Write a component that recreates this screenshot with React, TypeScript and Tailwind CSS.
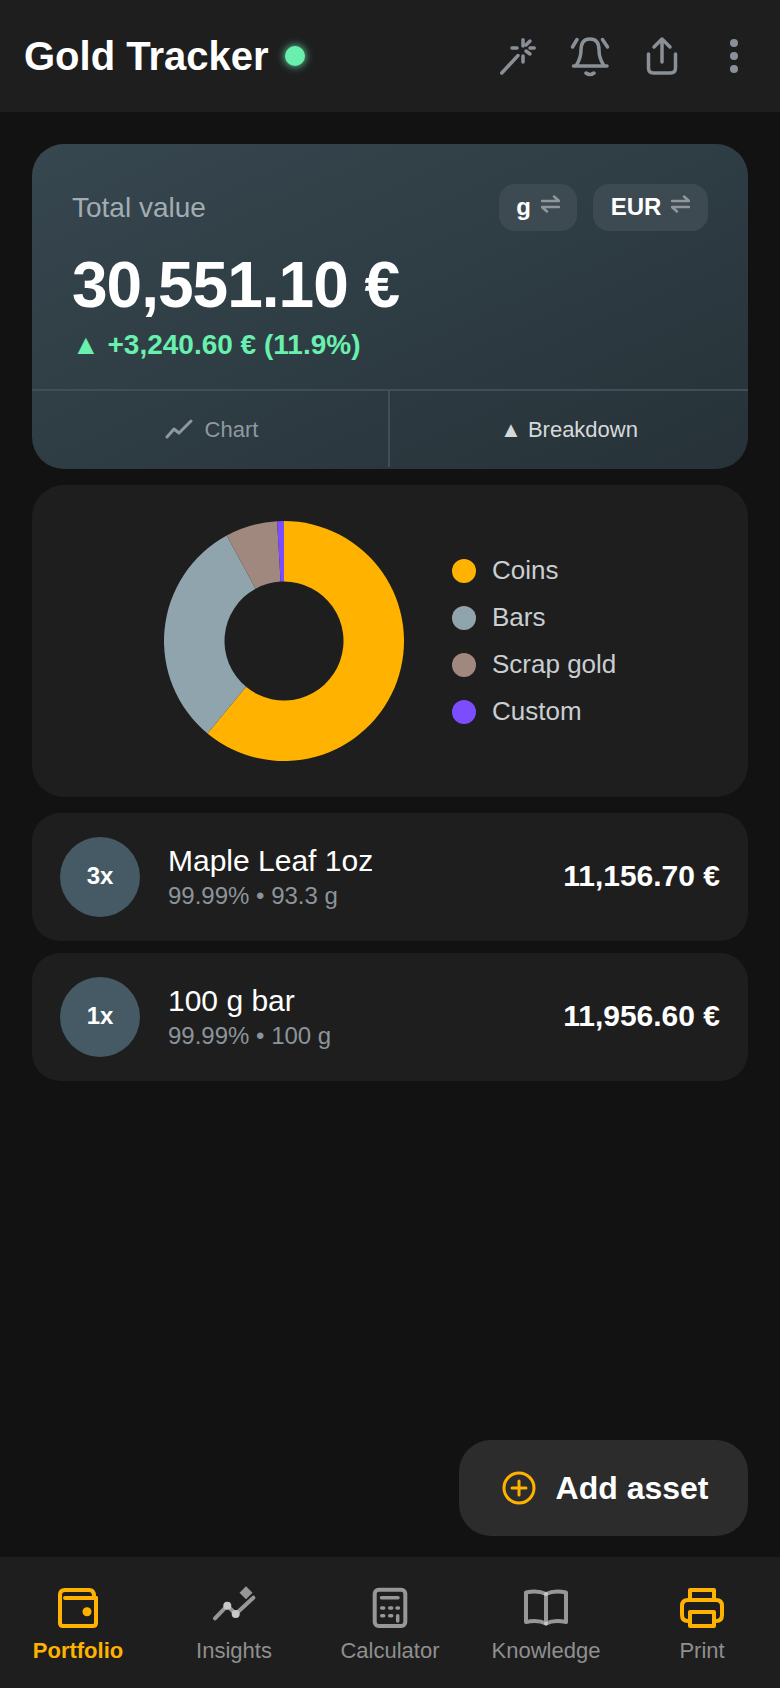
import React from "react";

const font = "font-['Liberation_Sans',Arial,sans-serif]";

function Wand() {
  return (
    <svg width="36" height="37" viewBox="0 0 36 37" fill="none" stroke="#8a9097" strokeWidth="3.500" strokeLinecap="round">
      <path d="M1.800 35 L18 17.500" />
      <path d="M23 1.800 V8 M26 7 L30 3 M30 10 H34.200 M12 10 H17 M26 13 L30 16 M23 18 V24" />
    </svg>
  );
}
function Bell() {
  return (
    <svg width="40" height="41" viewBox="0 0 40 41" fill="none" stroke="#8a9097" strokeWidth="3.500" strokeLinecap="round" strokeLinejoin="round">
      <path d="M3.500 30 H37" />
      <path d="M6.500 29 C9 25 11 20 11 14 C11 6 15 3 20 3 C25 3 29 6 29 14 C29 20 31 25 33.500 29" />
      <path d="M16 37 Q20 40 24 37" />
      <path d="M2.500 11 L7 3.500 M32.500 3.500 L37.500 11" />
    </svg>
  );
}
function ShareIcon() {
  return (
    <svg width="32" height="40" viewBox="0 0 32 40" fill="none" stroke="#8a9097" strokeWidth="3.500" strokeLinecap="round" strokeLinejoin="round">
      <path d="M16 26 V3 M8 11 L16 3 L24 11" />
      <path d="M2.500 18 V32 Q2.500 37 7.500 37 H24.500 Q29.500 37 29.500 32 V18" />
    </svg>
  );
}
function Dots() {
  return (
    <svg width="10" height="36" viewBox="0 0 10 36" fill="#8a9097">
      <circle cx="5" cy="5" r="4" />
      <circle cx="5" cy="18" r="4" />
      <circle cx="5" cy="31" r="4" />
    </svg>
  );
}
function Swap() {
  return (
    <svg width="19" height="18" viewBox="0 0 19 18" fill="none" stroke="#8f979c" strokeWidth="2.500" strokeLinecap="round" strokeLinejoin="round">
      <path d="M1 6 H18 L13 1.500" />
      <path d="M18 12 H1 L6 16.500" />
    </svg>
  );
}
function TrendLine() {
  return (
    <svg width="28" height="20" viewBox="0 0 28 20" fill="none" stroke="#8f979c" strokeWidth="3" strokeLinecap="round" strokeLinejoin="round">
      <path d="M2 18 L9 10 L14 14 L26 2" />
    </svg>
  );
}
function Donut() {
  const c = 140;
  const R = 120;
  const r = 59.5;
  const pt = (rad: number, deg: number) => {
    const a = ((deg - 90) * Math.PI) / 180;
    return `${c + rad * Math.cos(a)} ${c + rad * Math.sin(a)}`;
  };
  const seg = (a: number, b: number) =>
    `M${pt(R, a)} A${R} ${R} 0 ${b - a > 180 ? 1 : 0} 1 ${pt(R, b)} L${pt(r, b)} A${r} ${r} 0 ${b - a > 180 ? 1 : 0} 0 ${pt(r, a)} Z`;
  return (
    <svg width="280" height="280" viewBox="0 0 280 280">
      <path d={seg(0, 219.6)} fill="#ffb300" />
      <path d={seg(219.6, 331.5)} fill="#90a4ae" />
      <path d={seg(331.5, 356.7)} fill="#a1887f" />
      <path d={seg(356.7, 360)} fill="#7c4dff" />
    </svg>
  );
}
function WalletIcon() {
  return (
    <svg width="44" height="44" viewBox="0 0 44 44" fill="none" stroke="#ffb300" strokeWidth="4" strokeLinecap="round" strokeLinejoin="round">
      <path d="M40 12 V37 Q40 40 37 40 H7 Q4 40 4 37 V9 Q4 4 9 4 H33 Q38 4 38 10" />
      <path d="M9 12 H40" />
      <circle cx="31" cy="25.700" r="4.500" fill="#ffb300" stroke="none" />
    </svg>
  );
}
function InsightsIcon() {
  return (
    <svg width="44" height="44" viewBox="0 0 44 44" fill="none">
      <path d="M3 32.300 L15.300 19.700 L23.700 28 L41.300 11.700" stroke="#979797" strokeWidth="4" strokeLinecap="round" strokeLinejoin="round" />
      <circle cx="15.300" cy="19.700" r="4" fill="#c8c8c8" />
      <circle cx="23.700" cy="28" r="4" fill="#c8c8c8" />
      <path d="M34 0.200 L40.500 6.700 L34 13.200 L27.500 6.700 Z" fill="#979797" />
    </svg>
  );
}
function CalcIcon() {
  return (
    <svg width="44" height="44" viewBox="0 0 44 44" fill="none" stroke="#979797" strokeLinecap="round">
      <rect x="6.700" y="3.700" width="30.600" height="36.300" rx="4" strokeWidth="4" />
      <path d="M13.500 11.700 H30" strokeWidth="3.500" />
      <path d="M13.700 22 H15.700 M21.700 22 H23.700 M29 22 H30.500 M13.700 29.700 H15.700 M21.700 29.700 H23.700" strokeWidth="3.500" />
      <path d="M29.700 29.700 V35" strokeWidth="3.500" />
    </svg>
  );
}
function BookIcon() {
  return (
    <svg width="44" height="44" viewBox="0 0 44 44" fill="none" strokeLinejoin="round">
      <path d="M22 8 V37.500 M22 8 C16 5 9 5 2 6.500 V36 C9 34.500 16 34.500 22 37.500 C28 34.500 35 34.500 42 36 V6.500 C35 5 28 5 22 8" stroke="#979797" strokeWidth="4" />
      <circle cx="22" cy="8" r="2" fill="#c8c8c8" />
      <circle cx="22" cy="37.500" r="2" fill="#c8c8c8" />
    </svg>
  );
}
function PrintIcon() {
  return (
    <svg width="44" height="44" viewBox="0 0 44 44" fill="none" stroke="#ffb300" strokeWidth="4" strokeLinejoin="round">
      <path d="M10 14 V4 H34 V14" />
      <path d="M10 35 H8 Q2 35 2 29 V20 Q2 14 8 14 H36 Q42 14 42 20 V29 Q42 35 36 35 H34" />
      <rect x="10" y="26" width="24" height="14" />
    </svg>
  );
}

function Pill({ label, w }: { label: string; w: string }) {
  return (
    <div className={`flex h-[47px] ${w} items-center justify-center gap-[10px] rounded-[16px] bg-[#3e4a51] pb-[2px]`}>
      <span className="text-[24px] font-bold leading-none text-white">{label}</span>
      <span className="mb-[6px]"><Swap /></span>
    </div>
  );
}

function Asset({ qty, name, sub, price }: { qty: string; name: string; sub: string; price: string }) {
  return (
    <div className="flex h-[128px] items-center rounded-[28px] bg-[#1e1e1e] px-[28px]">
      <div className="flex h-[80px] w-[80px] items-center justify-center rounded-full bg-[#455a64] pb-[2px] text-[24px] font-bold text-white">{qty}</div>
      <div className="ml-[28px] flex-1">
        <div className="text-[30px] leading-[38px] text-white">{name}</div>
        <div className="text-[24px] leading-[32px] text-[#8b949b]">{sub}</div>
      </div>
      <div className="pb-[3px] text-[30px] font-bold text-white">{price}</div>
    </div>
  );
}

function Nav({ icon, label, active }: { icon: React.ReactNode; label: string; active?: boolean }) {
  return (
    <div className="flex flex-1 flex-col items-center">
      <div className="flex h-[44px] items-center justify-center">{icon}</div>
      <div className={`mt-[6px] text-[22px] leading-[30px] ${active ? "font-bold text-[#ffb300]" : "text-[#8f8f8f]"}`}>{label}</div>
    </div>
  );
}

export default function App() {
  return (
    <div className={`${font} flex h-[1688px] w-[780px] flex-col overflow-hidden bg-[#121212]`}>
      <header className="flex h-[112px] shrink-0 items-center bg-[#1e1e1e] pl-[24px] pr-[41px]">
        <h1 className="text-[40px] font-bold leading-none text-white">Gold Tracker</h1>
        <span className="ml-[16px] h-[20px] w-[20px] rounded-full bg-[#69f0ae] shadow-[0_0_8px_#69f0ae]" />
        <div className="ml-auto flex items-center">
          <Wand />
          <span className="ml-[34px]"><Bell /></span>
          <span className="ml-[36px]"><ShareIcon /></span>
          <span className="ml-[51px]"><Dots /></span>
        </div>
      </header>

      <main className="flex flex-1 flex-col px-[32px] pt-[32px]">
        <section className="h-[325px] overflow-hidden rounded-[32px] bg-gradient-to-br from-[#37474f] to-[#263238]">
          <div className="h-[245px] px-[40px] pt-[40px]">
            <div className="flex items-center justify-between">
              <span className="text-[28px] text-[#a2adb3]">Total value</span>
              <div className="flex gap-[16px]">
                <Pill label="g" w="w-[78px]" />
                <Pill label="EUR" w="w-[115px]" />
              </div>
            </div>
            <div className="mt-[14px] text-[64px] font-bold leading-[80px] tracking-[-1px] text-white">30,551.10 €</div>
            <div className="mt-[2px] text-[28px] font-bold leading-[36px] text-[#69f0ae]">▲ +3,240.60 € (11.9%)</div>
          </div>
          <div className="flex h-[80px] border-t-2 border-[#3e4f58] pb-[2px]">
            <div className="flex w-[358px] items-center justify-center gap-[12px] border-r-2 border-[#3e4f58] pl-[3px] text-[22px] text-[#8f999e]">
              <TrendLine />
              <span>Chart</span>
            </div>
            <div className="flex flex-1 items-center justify-center text-[22px] text-[#d6d9da]">▲ Breakdown</div>
          </div>
        </section>

        <section className="mt-[16px] flex h-[312px] items-center rounded-[32px] bg-[#1e1e1e] pl-[112px]">
          <Donut />
          <ul className="ml-[28px] flex flex-col gap-[17px]">
            {[
              ["Coins", "bg-[#ffb300]"],
              ["Bars", "bg-[#90a4ae]"],
              ["Scrap gold", "bg-[#a1887f]"],
              ["Custom", "bg-[#7c4dff]"],
            ].map(([t, c]) => (
              <li key={t} className="flex h-[30px] items-center">
                <span className={`h-[24px] w-[24px] rounded-full ${c}`} />
                <span className="ml-[16px] text-[26px] text-[#c9ced2]">{t}</span>
              </li>
            ))}
          </ul>
        </section>

        <div className="mt-[16px] flex flex-col gap-[12px]">
          <Asset qty="3x" name="Maple Leaf 1oz" sub="99.99% • 93.3 g" price="11,156.70 €" />
          <Asset qty="1x" name="100 g bar" sub="99.99% • 100 g" price="11,956.60 €" />
        </div>

        <div className="mt-auto mb-[21px] flex justify-end">
          <button className="flex h-[96px] w-[289px] items-center justify-center gap-[20px] rounded-[32px] bg-[#2c2c2c] pl-[3px] text-[32px] font-bold text-white">
            <svg width="34" height="34" viewBox="0 0 34 34" fill="none" stroke="#ffb300" strokeWidth="3" strokeLinecap="round">
              <circle cx="17" cy="17" r="15" />
              <path d="M17 10 V24 M10 17 H24" />
            </svg>
            Add asset
          </button>
        </div>
      </main>

      <nav className="flex h-[131px] shrink-0 bg-[#1e1e1e] pt-[29px]">
        <Nav icon={<WalletIcon />} label="Portfolio" active />
        <Nav icon={<InsightsIcon />} label="Insights" />
        <Nav icon={<CalcIcon />} label="Calculator" />
        <Nav icon={<BookIcon />} label="Knowledge" />
        <Nav icon={<PrintIcon />} label="Print" />
      </nav>
    </div>
  );
}
